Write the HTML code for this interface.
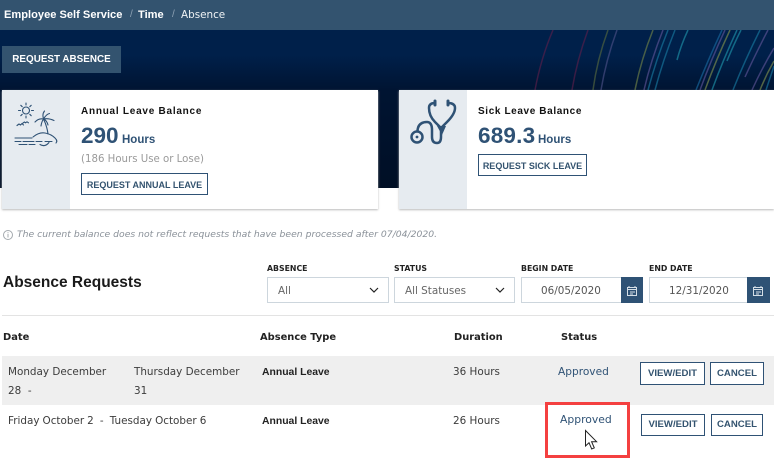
<!DOCTYPE html>
<html><head><meta charset="utf-8"><style>
html,body{margin:0;padding:0;background:#fff}
#p{position:relative;width:774px;height:458px;overflow:hidden;background:#fff;font-family:"DejaVu Sans","Liberation Sans",sans-serif;color:#333}
#p div{position:absolute;box-sizing:border-box}
.t{white-space:nowrap;line-height:16px;height:16px}
.r{font-family:"Liberation Sans",sans-serif;font-weight:700}
.o{font-size:10.4px;color:#3c3c3c}
.h{font-size:9.9px;font-weight:700;color:#222}
.l{font-size:7.8px;font-weight:700;color:#222}
.b{border:1.4px solid #2f5275;background:#fff;color:#33536f;font:700 9.6px/21px "Liberation Sans",sans-serif;text-align:center;white-space:nowrap}
.b.c{font-size:9px;line-height:22px}
.in{border:1.4px solid #cdd6dd;background:#fff}
.cal{background:#2f5275}
</style></head><body><div id="p">
<div style="left:0;top:30px;width:774px;height:158px;background:linear-gradient(#00204a 0,#00204a 25px,#001432 60px,#000f25 158px)"></div>
<svg style="position:absolute;left:0;top:0" width="774" height="458" fill="none" stroke-width="1.5">
<g opacity=".65">
<path d="M553 30Q541 58 535 90" stroke="#5a1f4a"/>
<path d="M588 30Q577 60 572 90" stroke="#5a1f4a"/>
<path d="M608 30Q597 60 593 90" stroke="#55683f"/>
<path d="M617 30Q606 60 601 90" stroke="#4a4f85"/>
<path d="M653 30Q641 60 635 90" stroke="#6f8148"/>
<path d="M663 30Q651 60 644 90" stroke="#5d5396"/>
<path d="M668 30Q656 60 648 90" stroke="#17789f"/>
<path d="M675 30Q663 60 655 90" stroke="#17789f"/>
<path d="M688 30Q681 45 677 60" stroke="#1e91a8"/>
<path d="M722 30Q708 60 696 90" stroke="#17689f"/>
<path d="M725 30Q711 60 700 90" stroke="#5d5396"/>
<path d="M730 30Q716 60 705 90" stroke="#7f8f4d"/>
<path d="M737 30Q723 60 712 90" stroke="#1e91a8"/>
<path d="M741 30Q733 46 727 61" stroke="#1e91a8"/>
<path d="M760 30Q745 60 733 90" stroke="#17789f"/>
<path d="M768 30Q755 55 745 77" stroke="#5d5396"/>
<path d="M774 48Q762 68 752 90" stroke="#5d5396"/>
<path d="M774 61Q766 75 760 90" stroke="#7f8f4d"/>
<path d="M774 66Q770 78 766 90" stroke="#17789f"/>
</g></svg>
<div style="left:0;top:0;width:774px;height:30px;background:#33536f"></div>
<div class="t r" style="left:4px;top:7px;font-size:11.1px;color:#fff">Employee Self Service</div>
<div class="t" style="left:130px;top:7px;font-size:10px;color:#8ea2b4;font-family:'Liberation Sans'">/</div>
<div class="t r" style="left:138px;top:7px;font-size:11.1px;color:#fff">Time</div>
<div class="t" style="left:172px;top:7px;font-size:10px;color:#8ea2b4;font-family:'Liberation Sans'">/</div>
<div class="t" style="left:181px;top:7px;font-size:10.4px;color:#f0f3f5">Absence</div>
<div style="left:2px;top:46px;width:119px;height:27px;background:#33536f;color:#fff;font:700 9.9px/28px 'Liberation Sans',sans-serif;text-align:center;white-space:nowrap">REQUEST ABSENCE</div>

<div style="left:2px;top:90px;width:376px;height:119px;background:#fff;box-shadow:0 1px 2px #bbb"></div>
<div style="left:2px;top:90px;width:68px;height:119px;background:#e6ebf0"></div>
<div style="left:399px;top:90px;width:375px;height:119px;background:#fff;box-shadow:0 1px 2px #bbb"></div>
<div style="left:399px;top:90px;width:68px;height:119px;background:#e6ebf0"></div>

<svg style="position:absolute;left:0;top:0" width="774" height="458" fill="none" stroke="#2f5275" stroke-linecap="round" stroke-linejoin="round">
<g stroke-width="1.1">
<circle cx="26" cy="110.500" r="3.500"/>
<path d="M26 103v2M26 116v2M18.500 110.500h2M31.500 110.500h2M20.800 105.300l1.400 1.400M29.800 114.300l1.400 1.400M20.800 115.700l1.400-1.400M29.800 106.700l1.400-1.400"/>
<path d="M17 125.500l2-1.500 1.500 1 1.500-1.500 1.500 1.500M23 123l1.500-1 1 .8 1.500-1 1.500 1"/>
<path d="M48 134q-1-8-4.500-15M43.500 119q-5-1-8.500 3M43.500 119q-1.500-5 1-8M43.500 119q3-5 6-5.500M43.500 119q5-1 10.500 1.500M43.500 119q-2 3-2.500 7M44 119q3 2 4 6"/>
<path d="M33 137q6-5 12-4t10 5q3 3 1 5"/>
<path d="M15 138h17M15 141.500h6M23 141.500h11M36 141.500h6M45 141.500h7M19 144.500h8M29 144.500h6M40 144.500q5 3 9 -2"/>
</g>
<g stroke-width="2.500">
<path d="M435 103q-6 0-6 5q0 8 6 14l6 6l6-6q8-8 8-14q0-5-7-5"/>
<path d="M441 129v8q0 6-4 6q-5 0-5-6v-7q0-8-5-8q-9 0-9.500 9"/>
<circle cx="417" cy="137" r="5.500"/>
</g>
<path d="M437 126h9l-4 9z" fill="#2f5275" stroke="none"/>
<path d="M435 101v4M448 101v4" stroke-width="3"/>
<circle cx="417" cy="137" r="1.400" fill="#2f5275" stroke="none"/>
</svg>

<div class="t r" style="left:81px;top:104px;font-size:10px;letter-spacing:.75px;color:#111">Annual Leave Balance</div>
<div class="t r" style="left:81px;top:128px;font-size:22.500px;color:#2f5275">290</div>
<div class="t r" style="left:122px;top:132px;font-size:11.500px;color:#2f5275">Hours</div>
<div class="t o" style="left:81px;top:152px;color:#9a9a9a;font-size:10.200px">(186 Hours Use or Lose)</div>
<div class="b c" style="left:81px;top:173px;width:127px;height:22px">REQUEST ANNUAL LEAVE</div>

<div class="t r" style="left:478px;top:104px;font-size:10px;letter-spacing:.62px;color:#111">Sick Leave Balance</div>
<div class="t r" style="left:478px;top:128px;font-size:22.500px;letter-spacing:.2px;color:#2f5275">689.3</div>
<div class="t r" style="left:538px;top:132px;font-size:11.500px;color:#2f5275">Hours</div>
<div class="b c" style="left:478px;top:154px;width:109px;height:22px">REQUEST SICK LEAVE</div>

<svg style="position:absolute;left:2px;top:229px" width="12" height="12" fill="none" stroke="#a3a9ae"><circle cx="6" cy="6" r="4.500"/><path d="M6 5v3.500M6 3.200v1"/></svg>
<div class="t" style="left:17px;top:227px;font-size:9.250px;font-style:italic;color:#8a9199">The current balance does not reflect requests that have been processed after 07/04/2020.</div>

<div class="t r" style="left:3px;top:274px;font-size:15.500px;line-height:18px;height:18px;color:#1a1a1a">Absence Requests</div>
<div class="t l" style="left:267px;top:261px">ABSENCE</div>
<div class="t l" style="left:394px;top:261px">STATUS</div>
<div class="t l" style="left:521px;top:261px">BEGIN DATE</div>
<div class="t l" style="left:649px;top:261px">END DATE</div>

<div class="in" style="left:267px;top:277px;width:122px;height:26px"></div>
<div class="t o" style="left:278px;top:283px;color:#666">All</div>
<div class="in" style="left:394px;top:277px;width:121px;height:26px"></div>
<div class="t o" style="left:405px;top:283px;color:#666">All Statuses</div>
<div class="in" style="left:521px;top:277px;width:101px;height:26px"></div>
<div class="t o" style="left:541px;top:283px;color:#555">06/05/2020</div>
<div class="in" style="left:649px;top:277px;width:99px;height:26px"></div>
<div class="t o" style="left:669px;top:283px;color:#555">12/31/2020</div>
<div class="cal" style="left:621px;top:277px;width:22px;height:26px"></div>
<div class="cal" style="left:747px;top:277px;width:23px;height:26px"></div>
<svg style="position:absolute;left:0;top:0" width="774" height="458" fill="none">
<path d="M370 288l4 4 4-4M496 288l4 4 4-4" stroke="#222" stroke-width="1.200"/>
<g stroke="#d5dee6" stroke-width="1">
<path d="M627.500 287.500h9v8h-9zM627.500 289.500h9M629 286v2M635 286v2M630 292h5M630 294h3"/>
<path d="M753.500 287.500h9v8h-9zM753.500 289.500h9M755 286v2M761 286v2M756 292h5M756 294h3"/>
</g></svg>

<div style="left:2px;top:315px;width:772px;height:1px;background:#e3e3e3"></div>
<div class="t h" style="left:3px;top:330px">Date</div>
<div class="t h" style="left:260px;top:330px">Absence Type</div>
<div class="t h" style="left:454px;top:330px">Duration</div>
<div class="t h" style="left:561px;top:330px">Status</div>

<div style="left:2px;top:356px;width:772px;height:49px;background:#efefef"></div>
<div class="t o" style="left:8px;top:364px">Monday December</div>
<div class="t o" style="left:8px;top:383px">28&nbsp; -</div>
<div class="t o" style="left:134px;top:364px">Thursday December</div>
<div class="t o" style="left:134px;top:383px">31</div>
<div class="t r" style="left:262px;top:365px;font-size:10.400px;color:#222">Annual Leave</div>
<div class="t o" style="left:453px;top:364px">36 Hours</div>
<div class="t o" style="left:558px;top:364px;color:#2f5275;font-size:10.600px">Approved</div>
<div class="b" style="left:640px;top:362px;width:65px;height:23px;line-height:22px">VIEW/EDIT</div>
<div class="b" style="left:710px;top:362px;width:54px;height:23px;line-height:22px">CANCEL</div>

<div class="t o" style="left:8px;top:413px;word-spacing:-.25px">Friday October 2 &nbsp;-&nbsp; Tuesday October 6</div>
<div class="t r" style="left:262px;top:414px;font-size:10.400px;color:#222">Annual Leave</div>
<div class="t o" style="left:453px;top:413px">26 Hours</div>
<div class="t o" style="left:560px;top:412px;color:#2f5275;font-size:10.800px">Approved</div>
<div class="b" style="left:641px;top:414px;width:64px;height:22px;line-height:20px">VIEW/EDIT</div>
<div class="b" style="left:711px;top:414px;width:52px;height:22px;line-height:20px">CANCEL</div>

<div style="left:545px;top:402px;width:85px;height:56px;border:3px solid #f44040"></div>
<svg style="position:absolute;left:0;top:0" width="774" height="458"><path d="M585.500 430.500v15.500l3.500-3.300 2.700 6.300 2.600-1.100-2.700-6.200h5z" fill="#fff" stroke="#222" stroke-width="1"/></svg>
</div></body></html>
